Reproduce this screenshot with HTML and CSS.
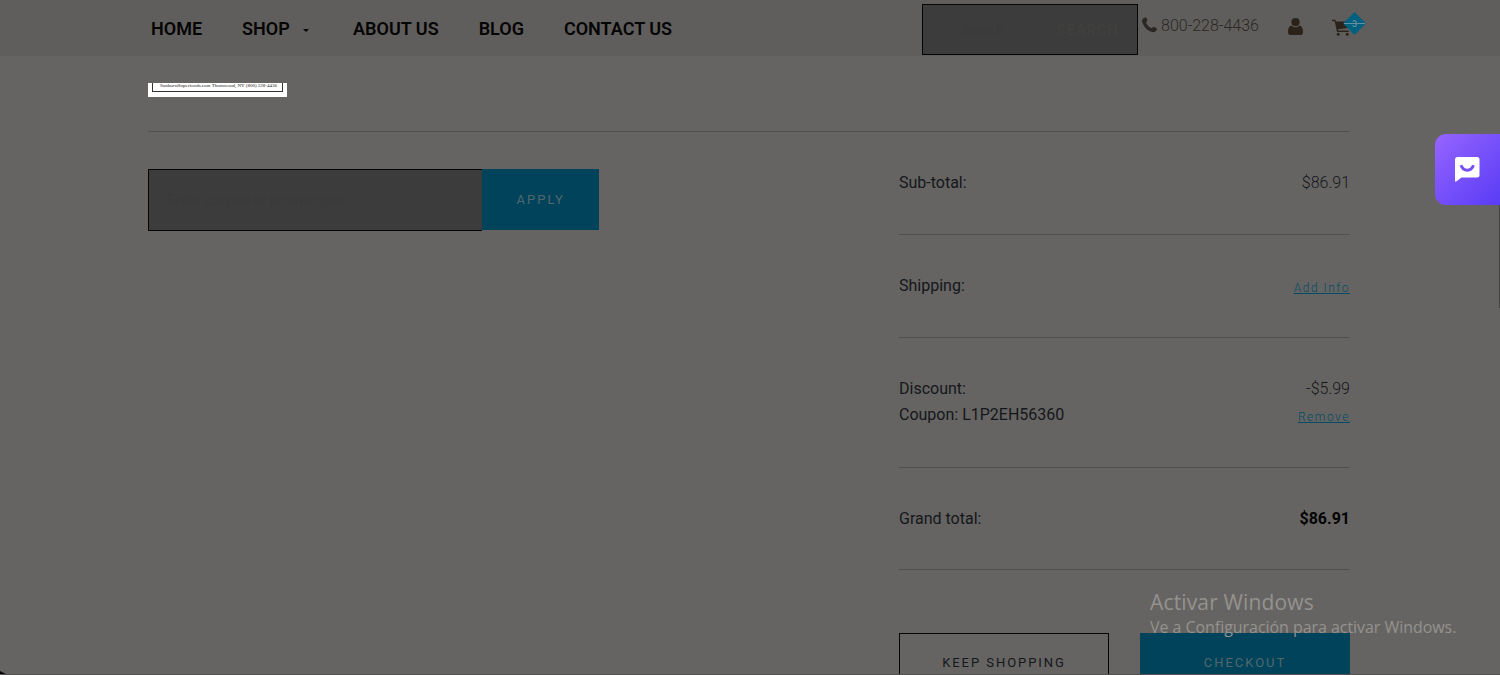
FILE: index.html
```html
<!DOCTYPE html>
<html lang="en">
<head>
    <meta charset="UTF-8">
    <meta name="viewport" content="width=device-width, initial-scale=1.0">
    <title>Shopping Cart</title>
    <link rel="stylesheet" href="styles.css">
</head>
<body>
    <header class="site-header">
        <nav class="main-nav">
            <a href="#">HOME</a>
            <a href="#" class="has-menu">SHOP <span class="caret"></span></a>
            <a href="#">ABOUT US</a>
            <a href="#">BLOG</a>
            <a href="#">CONTACT US</a>
        </nav>
        <div class="search-box">
            <span class="search-hint">Search</span>
            <span class="search-btn">SEARCH</span>
        </div>
        <a href="#" class="phone">
            <svg width="15" height="16" viewBox="0 0 15 16"><path d="M3.5.4C4.3.1 4.8 1.9 5.3 3.1c.5 1.2-1.3 1.7-1.2 2.5.5 2 3.2 5 5.3 5.5.8.2 1.6-1.7 2.4-1.3 1 .5 3.1 1.4 3.1 1.9 0 2.1-2.2 3.8-4.4 3.4C5.500 14.300.5 8.500.1 4 0 2 1.500.6 3.500.4z"/></svg>
            <span>800-228-4436</span>
        </a>
        <a href="#" class="account">
            <svg width="15" height="17" viewBox="0 0 15 17"><circle cx="7.500" cy="4.200" r="4.100"/><path d="M3.400 7.400C1 7.800 0 10.500 0 13.900 0 15.800 1 17 2.600 17h9.800c1.600 0 2.600-1.200 2.600-3.100 0-3.400-1-6.100-3.400-6.500C10.500 8.600 9 9.200 7.500 9.200S4.500 8.600 3.400 7.400z"/></svg>
        </a>
        <a href="#" class="cart">
            <svg width="18" height="17" viewBox="0 0 18 17"><path d="M0 .7h3.400l.6 1.900h14v6.200L6 10.300l.2 1.300h10.600v1.500H5L2.700 2.200H0z"/><circle cx="6.200" cy="15.200" r="1.500"/><circle cx="15.200" cy="15.200" r="1.500"/></svg>
            <span class="badge"><svg width="23" height="23" viewBox="0 0 23 23"><path class="diamond" d="M11.500 0 23 11.500 11.500 23 0 11.500z"/><path class="stripe" d="M1 11.500h21"/></svg><b>3</b></span>
        </a>
    </header>

    <main class="container">
        <div class="cart-item">
            <div class="product-thumb"><span>SunburstSuperfoods.com Thornwood, NY (800) 228-4436</span></div>
        </div>

        <div class="cart-bottom">
            <form class="coupon">
                <input type="text" placeholder="Enter coupon or promo code">
                <button type="button">APPLY</button>
            </form>

            <section class="totals">
                <div class="row">
                    <span>Sub-total:</span>
                    <span class="price">$86.91</span>
                </div>
                <div class="row shipping">
                    <span>Shipping:</span>
                    <a href="#" class="link">Add Info</a>
                </div>
                <div class="row discount">
                    <div>Discount:<br>Coupon: L1P2EH56360</div>
                    <div class="amount">
                        <span class="price">-$5.99</span>
                        <a href="#" class="link">Remove</a>
                    </div>
                </div>
                <div class="row grand">
                    <span>Grand total:</span>
                    <strong>$86.91</strong>
                </div>
                <div class="actions">
                    <a href="#" class="btn btn-outline">KEEP SHOPPING</a>
                    <a href="#" class="btn btn-primary">CHECKOUT</a>
                </div>
            </section>
        </div>
    </main>

    <div class="chat-tab">
        <svg width="25" height="25" viewBox="0 0 25 25"><path fill="#fff" d="M2.500 0H22a2.500 2.500 0 0 1 2.500 2.500V18a2.500 2.500 0 0 1-2.500 2.500H6.500L1.200 24.600Q0 25 0 23.500v-21A2.500 2.500 0 0 1 2.500 0z"/><path fill="none" stroke="#7450f5" stroke-width="3" d="M6 8.300c2.500 6.600 10 6.600 12.500 0"/></svg>
    </div>

    <div class="watermark">
        <div class="watermark-title">Activar Windows</div>
        <div class="watermark-text">Ve a Configuración para activar Windows.</div>
    </div>
    <div class="scroll-edge"></div>
    <div class="corner"></div>
</body>
</html>
```
FILE: styles.css
```css
* {
    margin: 0;
    padding: 0;
    box-sizing: border-box;
}

body {
    font-family: Roboto, "Liberation Sans", sans-serif;
    background: #666462;
    color: #14171b;
    height: 675px;
    overflow: hidden;
    position: relative;
    border-bottom: 1px solid #555352;
}

a {
    color: inherit;
    text-decoration: none;
}

.site-header {
    height: 56px;
    background: #605e5c;
    display: flex;
    align-items: flex-start;
    padding: 4px 0 0 151px;
}

.main-nav {
    display: flex;
    width: 771px;
    gap: 40px;
    padding-top: 14px;
    font-size: 18px;
    font-weight: 600;
    line-height: 22px;
    color: #050505;
    white-space: nowrap;
}

.has-menu {
    display: flex;
    align-items: center;
    width: 71px;
}

.caret {
    border: 3.5px solid transparent;
    border-top-color: #050505;
    border-bottom: 0;
    margin: 2px 0 0 13px;
}

.search-box {
    width: 216px;
    height: 51px;
    background: #3c3c3c;
    border: 1px solid #050505;
    display: flex;
    align-items: center;
    justify-content: space-between;
    padding: 0 18px 0 38px;
    font-size: 14px;
    color: #3a3a3a;
}

.search-btn {
    color: #42413d;
    letter-spacing: 1.5px;
}

.phone {
    display: flex;
    align-items: flex-start;
    gap: 4px;
    width: 150px;
    padding: 13px 0 0 4px;
    fill: #2b2722;
}

.phone span {
    font-size: 16px;
    font-weight: 300;
    line-height: 18px;
    color: #2b2722;
}

.account {
    width: 44px;
    padding-top: 14px;
    fill: #2b2319;
}

.cart {
    position: relative;
    padding-top: 15px;
    fill: #2b2319;
}

.badge {
    position: absolute;
    top: 8px;
    left: 11px;
    width: 23px;
    height: 23px;
}

.badge b {
    position: absolute;
    top: 6px;
    left: 9px;
    font-size: 9px;
    line-height: 12px;
    font-weight: 500;
    color: #6e8d99;
}

.diamond {
    fill: #006080;
}

.stripe {
    stroke: #6390a0;
    stroke-width: 1px;
}

.container {
    width: 1202px;
    margin-left: 148px;
}

.cart-item {
    height: 76px;
    padding-top: 27px;
    border-bottom: 1px solid #52504e;
}

.product-thumb {
    width: 139px;
    height: 14px;
    background: #fff;
    padding: 0 4px;
}

.product-thumb span {
    display: block;
    height: 9px;
    border: 1px solid #333;
    border-top: 0;
    font: 5px/5px "Liberation Serif", serif;
    text-align: right;
    padding-right: 5px;
    color: #222;
    white-space: nowrap;
}

.cart-bottom {
    display: flex;
    justify-content: space-between;
}

.coupon {
    display: flex;
    align-items: flex-start;
    width: 451px;
    padding-top: 37px;
}

.coupon input {
    width: 335px;
    height: 62px;
    border: 1px solid #050505;
    border-right: 0;
    background: #3c3c3c;
    padding-left: 19px;
    font: 14px Roboto, sans-serif;
}

.coupon input::placeholder {
    color: #3a3a3a;
}

.coupon button {
    width: 117px;
    height: 61px;
    border: 0;
    background: #00435b;
    color: #50686d;
    font: 13px Roboto, sans-serif;
    letter-spacing: 2px;
    padding-bottom: 1px;
}

.totals {
    width: 451px;
    font-size: 16px;
    line-height: 26px;
}

.row {
    display: flex;
    justify-content: space-between;
    height: 103px;
    padding-top: 38px;
    border-bottom: 1px solid #52504e;
}

.row.discount {
    height: 130px;
    padding-top: 38px;
}

.row.grand {
    height: 102px;
}

.price {
    font-weight: 300;
}

.amount {
    display: flex;
    flex-direction: column;
    align-items: flex-end;
}

strong {
    font-weight: 700;
    color: #050505;
}

.link {
    color: #044c66;
    font-size: 12px;
    letter-spacing: 1.5px;
    text-decoration: underline;
    font-weight: 300;
    padding-top: 2px;
}

.actions {
    display: flex;
    justify-content: space-between;
    padding-top: 63px;
}

.btn {
    width: 210px;
    height: 60px;
    line-height: 60px;
    text-align: center;
    font-size: 13px;
    letter-spacing: 1.95px;
}

.btn-outline {
    border: 1px solid #050505;
    line-height: 58px;
}

.btn-primary {
    background: #00435b;
    color: #50686d;
}

.chat-tab {
    position: absolute;
    top: 134px;
    right: 0;
    width: 65px;
    height: 71px;
    border-radius: 11px 0 0 11px;
    background: linear-gradient(135deg, #9565ff, #593cf5);
    padding: 23px 0 0 20px;
}

.watermark {
    position: absolute;
    left: 1150px;
    top: 588px;
    font-family: "Open Sans", sans-serif;
    color: #94928f;
    white-space: nowrap;
}

.watermark-title {
    font-size: 21px;
    line-height: 28px;
    letter-spacing: 0.15px;
}

.watermark-text {
    font-size: 16px;
    line-height: 22px;
    letter-spacing: -0.05px;
}

.scroll-edge {
    position: absolute;
    top: 205px;
    right: 0;
    width: 1px;
    height: 103px;
    background: #434240;
}

.corner {
    position: absolute;
    left: 0;
    bottom: -1px;
    width: 8px;
    height: 4px;
    background: #08080c;
    clip-path: polygon(0 0, 100% 100%, 0 100%);
}
```
